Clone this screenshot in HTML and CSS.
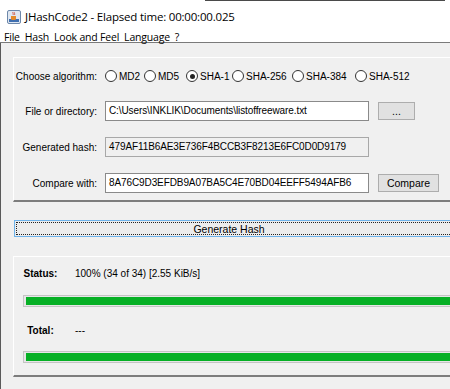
FILE: index.html
```html
<!DOCTYPE html>
<html>
<head>
    <meta charset="UTF-8">
    <title>JHashCode2</title>
    <link rel="stylesheet" href="styles.css">
</head>
<body>
    <div class="window">
        <div class="titlebar">
            <svg class="app-icon" width="14" height="14" viewBox="0 0 14 14">
                <rect x="0.5" y="0.5" width="13" height="13" rx="1.5" fill="#dfe7f1" stroke="#6d88aa"/>
                <rect x="2" y="9" width="10" height="3" fill="#3f6fb0"/>
                <path d="M4 6h5v2.5a1.5 1.5 0 0 1-1.5 1.5h-2A1.5 1.5 0 0 1 4 8.5z" fill="#e48a2a"/>
                <path d="M6 2c-1 1 1 1.5 0 3M7.5 2c-1 1 1 1.5 0 3" stroke="#d0442c" stroke-width="0.8" fill="none"/>
            </svg>
            <span class="title">JHashCode2 - Elapsed time: 00:00:00.025</span>
        </div>
        <div class="menubar">
            <span>File</span>
            <span>Hash</span>
            <span>Look and Feel</span>
            <span>Language</span>
            <span>?</span>
        </div>
        <div class="content">
            <div class="panel form-panel">
                <div class="label">Choose algorithm:</div>
                <div class="radios">
                    <label class="radio"><span class="dot"></span>MD2</label>
                    <label class="radio"><span class="dot"></span>MD5</label>
                    <label class="radio"><span class="dot checked"></span>SHA-1</label>
                    <label class="radio"><span class="dot"></span>SHA-256</label>
                    <label class="radio"><span class="dot"></span>SHA-384</label>
                    <label class="radio"><span class="dot"></span>SHA-512</label>
                </div>

                <div class="label">File or directory:</div>
                <div class="field-row">
                    <div class="field">C:\Users\INKLIK\Documents\listoffreeware.txt</div>
                    <button class="btn btn-browse">...</button>
                </div>

                <div class="label">Generated hash:</div>
                <div class="field-row">
                    <div class="field readonly">479AF11B6AE3E736F4BCCB3F8213E6FC0D0D9179</div>
                </div>

                <div class="label">Compare with:</div>
                <div class="field-row">
                    <div class="field">8A76C9D3EFDB9A07BA5C4E70BD04EEFF5494AFB6</div>
                    <button class="btn btn-compare">Compare</button>
                </div>
            </div>

            <button class="generate"><span class="focus">Generate Hash</span></button>

            <div class="panel status-panel">
                <div class="stat-row">
                    <span class="stat-label">Status:</span>
                    <span class="stat-value">100% (34 of 34) [2.55 KiB/s]</span>
                </div>
                <div class="progress"><div class="fill" style="width: 100%"></div></div>
                <div class="stat-row">
                    <span class="stat-label">Total:</span>
                    <span class="stat-value">---</span>
                </div>
                <div class="progress"><div class="fill" style="width: 100%"></div></div>
            </div>
        </div>
    </div>
</body>
</html>
```

FILE: styles.css
```css
html, body {
    margin: 0;
    padding: 0;
    width: 450px;
    height: 389px;
    overflow: hidden;
    background: #f0f0f0;
}
.window {
    font-family: "Liberation Sans", Arial, sans-serif;
    font-size: 10px;
    color: #000;
}
.titlebar {
    height: 31px;
    display: flex;
    align-items: center;
    padding-left: 7px;
    padding-top: 2px;
    box-sizing: border-box;
    background: #fff linear-gradient(to right, #fff 205px, #4a4a4a 205px, #4a4a4a 445px, #fff 445px) no-repeat;
    background-size: 100% 1px;
}
.app-icon {
    margin-right: 4px;
}
.title {
    font-family: "Open Sans", "Noto Sans", sans-serif;
    font-size: 11.5px;
    letter-spacing: -0.2px;
}
.menubar {
    height: 11px;
    background: #fff;
    display: flex;
    align-items: center;
    padding-left: 4px;
    font-family: "Open Sans", "Noto Sans", sans-serif;
    font-size: 10.5px;
    letter-spacing: -0.2px;
    border-bottom: 1px solid #7a7a7a;
}
.menubar span {
    margin-right: 5px;
}
.content {
    background: #f0f0f0;
    border-left: 1px solid #5a5a5a;
    padding-top: 14px;
    height: 332px;
}
.panel {
    margin-left: 12px;
    margin-right: -20px;
    border-top: 1px solid #fff;
    border-left: 1px solid #fff;
    border-bottom: 2px solid #7d7d7d;
}
.form-panel {
    display: grid;
    grid-template-columns: 83px 1fr;
    grid-template-rows: 18px 20px 20px 20px;
    column-gap: 8px;
    row-gap: 16px;
    padding: 9px 0 7px 0;
}
.label {
    text-align: right;
    align-self: center;
    white-space: nowrap;
}
.radios {
    display: grid;
    grid-template-columns: 39px 42px 46px 60px 63px auto;
    align-items: center;
}
.radio {
    display: flex;
    align-items: center;
    white-space: nowrap;
}
.dot {
    flex: none;
    width: 12px;
    height: 12px;
    border: 1px solid #333;
    border-radius: 50%;
    background: #fff;
    margin-right: 2px;
    box-sizing: border-box;
    position: relative;
}
.dot.checked::after {
    content: "";
    position: absolute;
    left: 2.5px;
    top: 2.5px;
    width: 5px;
    height: 5px;
    border-radius: 50%;
    background: #222;
}
.field-row {
    display: flex;
    align-items: center;
}
.field {
    width: 264px;
    height: 20px;
    box-sizing: border-box;
    border: 1px solid #8a8a8a;
    background: #fff;
    padding-left: 3px;
    line-height: 18px;
    white-space: nowrap;
    overflow: hidden;
    letter-spacing: -0.1px;
}
.field.readonly {
    background: #f0f0f0;
    border-color: #a8a8a8;
}
.btn {
    font-family: inherit;
    font-size: 10.5px;
    height: 18px;
    margin-left: 9px;
    padding: 0;
    background: #e1e1e1;
    border: 1px solid #adadad;
    color: #000;
}
.btn-browse {
    width: 37px;
}
.btn-compare {
    width: 61px;
}
.generate {
    display: block;
    margin: 18px 0 19px 13px;
    width: 460px;
    height: 17px;
    padding: 1px;
    font-family: inherit;
    font-size: 10.5px;
    background: #ececec;
    border: 1px solid #6eb2ea;
    box-sizing: border-box;
}
.generate .focus {
    display: block;
    height: 13px;
    line-height: 12px;
    border: 1px dotted #222;
    box-sizing: border-box;
    padding-right: 30px;
}
.status-panel {
    padding: 9px 0 12px 9px;
}
.stat-row {
    display: flex;
    align-items: center;
    height: 14px;
}
.stat-label {
    font-weight: bold;
    width: 35px;
    text-align: center;
    margin-right: 17px;
}
.progress {
    margin-top: 15px;
    height: 12px;
    box-sizing: border-box;
    border: 1px solid #c4c4c4;
    background: #e6e6e6;
    padding: 1px 0 1px 2px;
}
.progress + .stat-row {
    margin-top: 16px;
}
.progress + .stat-row + .progress {
    margin-top: 14px;
}
.fill {
    height: 100%;
    background: #06b025;
}
```
